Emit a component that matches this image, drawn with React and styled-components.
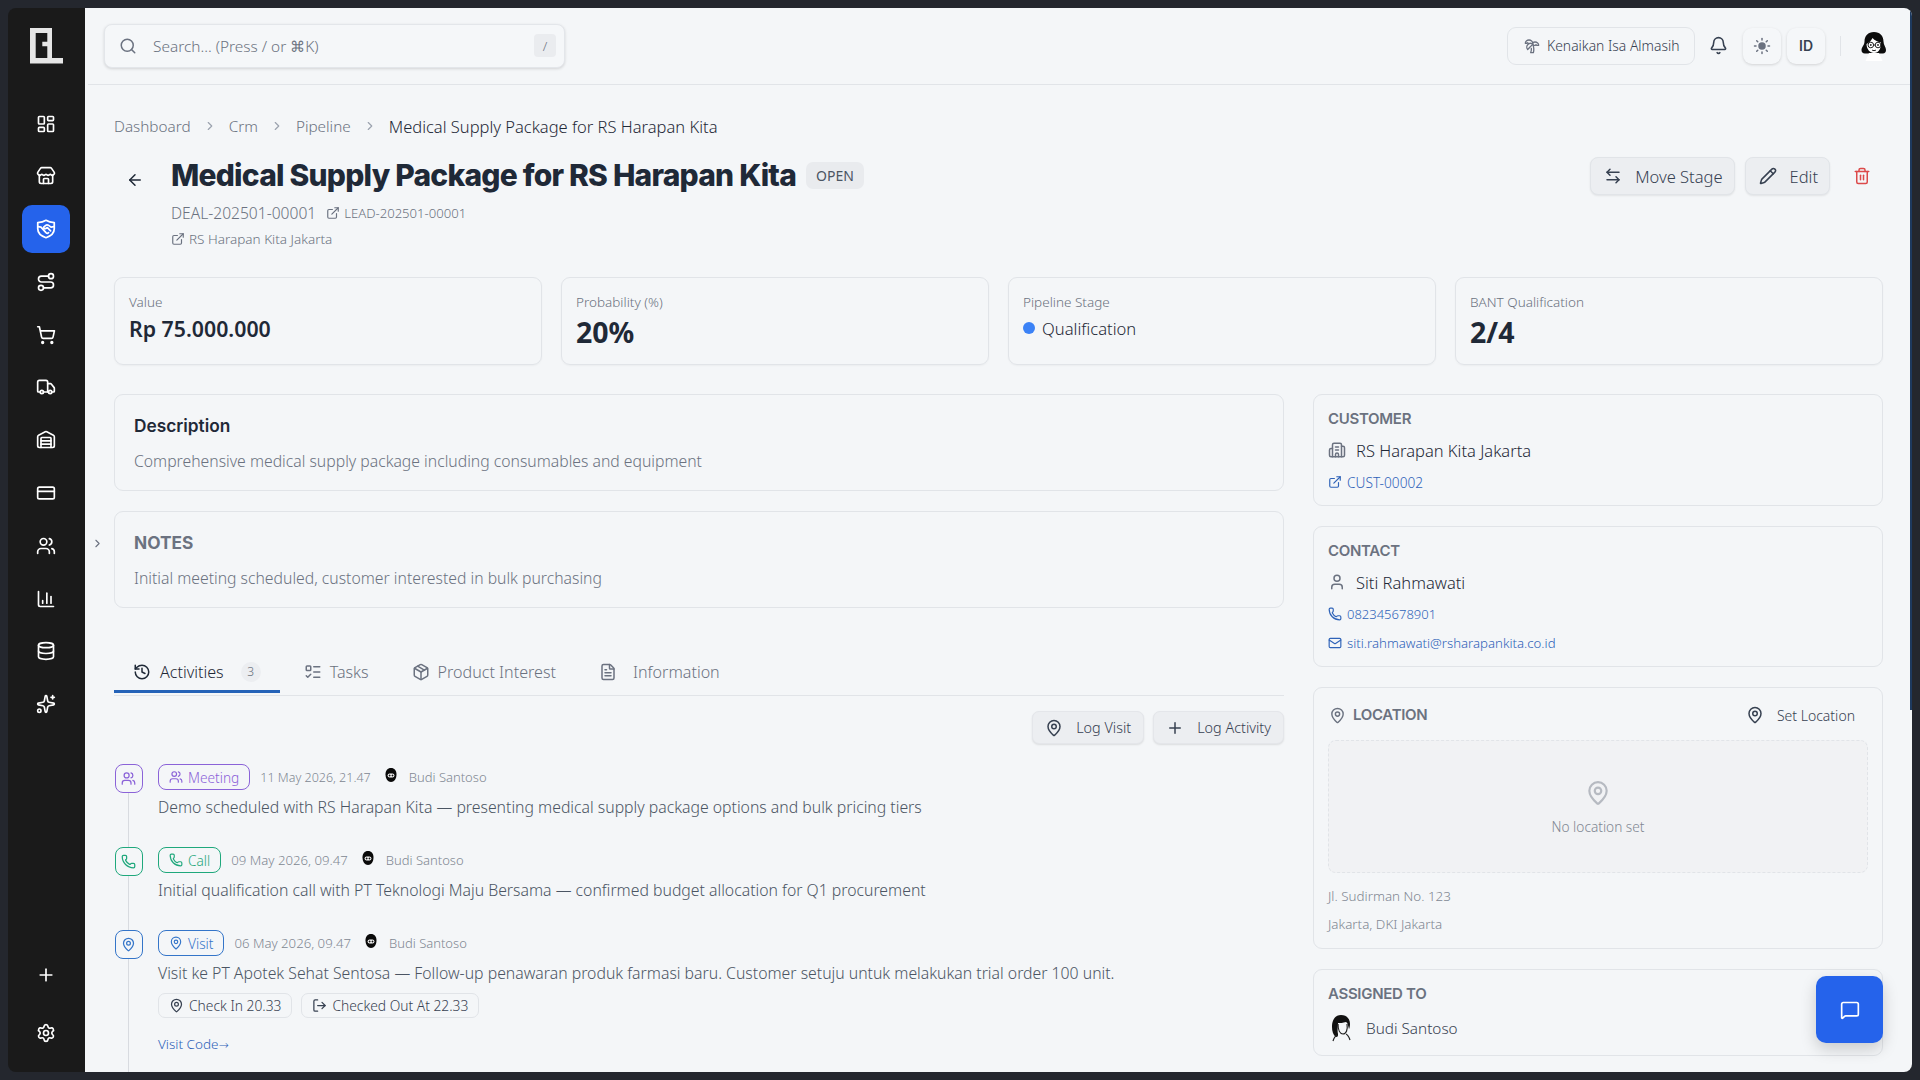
import styled, { createGlobalStyle } from 'styled-components';
import {
  ArrowLeft, ArrowLeftRight, Bell, Building2, ChartColumn, ChevronRight, CreditCard, Database,
  ExternalLink, FileText, History, LayoutDashboard, ListTodo, LogOut, Mail, MapPin, MessageSquare,
  Package, Pencil, Phone, Plus, Route, Search, Settings, ShoppingCart, Sparkles, Store, Sun,
  Trash2, TreePalm, Truck, User, Users, Warehouse,
} from 'lucide-react';

const BODY = '"Noto Sans", "Open Sans", Arial, sans-serif';
const HEAD = 'Inter, "Liberation Sans", Arial, sans-serif';

const GlobalStyle = createGlobalStyle`
  html, body {
    margin: 0;
    height: 100%;
    background: #24272e;
    font-family: ${BODY};
    font-weight: 350;
    overflow: hidden;
  }
  * { box-sizing: border-box; }
`;

const Logo = () => (
  <svg width="33" height="36" viewBox="0 0 33 36">
    <path
      fill="#e6e6e6"
      fillRule="evenodd"
      d="M0 0H22V30H33V35.500H0ZM5.700 5V30H17.300V18.300H12.300V13.700H17.300V5Z"
    />
  </svg>
);

const ShieldHandshake = () => (
  <svg width="22" height="22" viewBox="0 0 24 24" fill="none" stroke="currentColor" strokeWidth="1.900" strokeLinecap="round" strokeLinejoin="round">
    <path d="M12 2.500c2.500 1.500 5.500 2.300 9 2.500v6.800c0 4.600-3.500 7.900-9 9.700-5.500-1.800-9-5.100-9-9.700V5c3.500-.2 6.500-1 9-2.500z" />
    <path d="M3.500 9.500l3 .5 5.500 6c.8.800 2 .8 2.800 0" />
    <path d="M20.500 9.500l-3 .5-3-2.200c-1-.6-2-.5-2.800.2L9.500 10c-.7 1 .8 2.200 2.300 1.500l1.700-1 3.500 3.500" />
  </svg>
);

const GirlAvatar = () => (
  <svg width="30" height="32" viewBox="0 0 30 32">
    <path fill="#0c0c0c" d="M15 2c6 0 9.500 4 9.500 9.500 0 3.500 2.500 5.500 2.500 8.500 0 2.500-1.500 4-4 3.500H7c-3 .5-4.500-1-4.500-3.500 0-3 3-5 3-8.500C5.500 6 9 2 15 2z" />
    <path fill="#fff" d="M7.500 14c2.500-1 4.500-3 6-6 2 2.500 6 4 8.500 4.500 0 6-2 10.500-7 10.500-4 0-7.500-4-7.500-9zM10 23h10l3.500 8H6.500z" />
    <circle cx="11.800" cy="15" r="2.800" fill="none" stroke="#222" strokeWidth="1" />
    <circle cx="19" cy="15" r="2.800" fill="none" stroke="#222" strokeWidth="1" />
    <circle cx="11.800" cy="15" r=".9" fill="#222" />
    <circle cx="19" cy="15" r=".9" fill="#222" />
    <path d="M14.600 15h1.600M13 20c1 .8 3 .8 4 0" fill="none" stroke="#222" strokeWidth="1" />
  </svg>
);

const TinyAvatar = () => (
  <TinySlot>
    <svg width="14" height="16" viewBox="0 0 14 16">
      <path fill="#0a0a0a" d="M7 1c3.500 0 5.500 2.500 5.500 6.500 0 4.500-2.500 7.500-5.500 7.500s-5.500-3-5.500-7.500C1.500 3.500 3.500 1 7 1z" />
      <rect x="3.600" y="6.500" width="6.800" height="4" rx="2" fill="#fff" />
      <circle cx="5.600" cy="8.500" r="1" fill="#111" />
      <circle cx="8.500" cy="8.500" r="1" fill="#111" />
    </svg>
  </TinySlot>
);

const BudiAvatar = () => (
  <svg width="26" height="28" viewBox="0 0 26 28">
    <path fill="#111" d="M12 1c6 0 9 4 9 9 0 3-1 5-1 5-1-3-1-6-3-7-3 1-6 1-8 1 0 4-1 7 0 11 0 2 0 3-2 3-3-2-4-6-4-10C3 6 6 1 12 1z" />
    <path fill="none" stroke="#222" strokeWidth="1.200" d="M9 10c0 6 2 10 5 10s5-4 4-10M8 21c-2 1-3 3-4 6M17 20c2 1 3 3 4 6" />
  </svg>
);

const topNav = [LayoutDashboard, Store, ShieldHandshake, Route, ShoppingCart, Truck, Warehouse, CreditCard, Users, ChartColumn, Database, Sparkles];

const activities = [
  {
    kind: 'Meeting', tone: '#8b63d8', Icon: Users, date: '11 May 2026, 21.47', narrow: true,
    text: 'Demo scheduled with RS Harapan Kita — presenting medical supply package options and bulk pricing tiers',
  },
  {
    kind: 'Call', tone: '#1fa87c', Icon: Phone, date: '09 May 2026, 09.47',
    text: 'Initial qualification call with PT Teknologi Maju Bersama — confirmed budget allocation for Q1 procurement',
  },
  {
    kind: 'Visit', tone: '#3475c9', Icon: MapPin, date: '06 May 2026, 09.47',
    text: 'Visit ke PT Apotek Sehat Sentosa — Follow-up penawaran produk farmasi baru. Customer setuju untuk melakukan trial order 100 unit.',
    visit: true,
  },
];

export default function App() {
  return (
    <>
      <GlobalStyle />
      <Frame>
        <Sidebar>
          <LogoSlot><Logo /></LogoSlot>
          <NavList>
            {topNav.map((Icon, i) => (
              <NavItem key={i} $active={i === 2}><Icon size={20} strokeWidth={2} /></NavItem>
            ))}
          </NavList>
          <NavFoot>
            <NavItem><Plus size={20} strokeWidth={2} /></NavItem>
            <NavItem><Settings size={20} strokeWidth={2} /></NavItem>
          </NavFoot>
        </Sidebar>

        <Main>
          <TopBar>
            <SearchBox>
              <Search size={18} color="#6b7280" />
              <SearchText>Search... (Press / or ⌘K)</SearchText>
              <Kbd>/</Kbd>
            </SearchBox>
            <TopRight>
              <HolidayPill><TreePalm size={16} color="#6b7280" />Kenaikan Isa Almasih</HolidayPill>
              <BellSlot><Bell size={19} color="#374151" /></BellSlot>
              <SquareBtn><Sun size={18} color="#6b7280" fill="#6b7280" /></SquareBtn>
              <SquareBtn>ID</SquareBtn>
              <TopDivider />
              <GirlAvatar />
            </TopRight>
          </TopBar>

          <Content>
            <Breadcrumb>
              <Crumb>Dashboard</Crumb>
              <ChevronRight size={14} color="#9ca3af" />
              <Crumb>Crm</Crumb>
              <ChevronRight size={14} color="#9ca3af" />
              <Crumb>Pipeline</Crumb>
              <ChevronRight size={14} color="#9ca3af" />
              <Crumb $current>Medical Supply Package for RS Harapan Kita</Crumb>
            </Breadcrumb>

            <PageHead>
              <BackSlot><ArrowLeft size={18} color="#1f2937" /></BackSlot>
              <HeadBody>
                <TitleRow>
                  <Title>Medical Supply Package for RS Harapan Kita</Title>
                  <StatusBadge>OPEN</StatusBadge>
                </TitleRow>
                <CodeRow>
                  <DealCode>DEAL-202501-00001</DealCode>
                  <GreyLink><ExternalLink size={14} />LEAD-202501-00001</GreyLink>
                </CodeRow>
                <SubRow><ExternalLink size={14} />RS Harapan Kita Jakarta</SubRow>
              </HeadBody>
              <HeadActions>
                <ActionBtn><ArrowLeftRight size={18} />Move Stage</ActionBtn>
                <ActionBtn><Pencil size={18} />Edit</ActionBtn>
                <TrashBtn><Trash2 size={18} color="#dc4a4a" /></TrashBtn>
              </HeadActions>
            </PageHead>

            <StatGrid>
              <StatCard>
                <StatLabel>Value</StatLabel>
                <StatMoney>Rp 75.000.000</StatMoney>
              </StatCard>
              <StatCard>
                <StatLabel>Probability (%)</StatLabel>
                <StatBig>20%</StatBig>
              </StatCard>
              <StatCard>
                <StatLabel>Pipeline Stage</StatLabel>
                <StageRow><StageDot />Qualification</StageRow>
              </StatCard>
              <StatCard>
                <StatLabel>BANT Qualification</StatLabel>
                <StatBig>2/4</StatBig>
              </StatCard>
            </StatGrid>

            <Columns>
              <LeftCol>
                <TextCard>
                  <CardHeading>Description</CardHeading>
                  <CardText>Comprehensive medical supply package including consumables and equipment</CardText>
                </TextCard>
                <TextCard>
                  <CardHeading $muted>NOTES</CardHeading>
                  <CardText>Initial meeting scheduled, customer interested in bulk purchasing</CardText>
                </TextCard>

                <TabList>
                  <Tab $active $gap={9}><History size={18} />Activities<TabCount>3</TabCount></Tab>
                  <Tab><ListTodo size={18} />Tasks</Tab>
                  <Tab><Package size={18} />Product Interest</Tab>
                  <Tab $gap={16}><FileText size={18} />Information</Tab>
                </TabList>

                <LogRow>
                  <LogBtn><MapPin size={18} />Log Visit</LogBtn>
                  <LogBtn><Plus size={18} />Log Activity</LogBtn>
                </LogRow>

                <Timeline>
                  {activities.map((a) => (
                    <Item key={a.kind}>
                      <Rail>
                        <RailIcon $tone={a.tone}><a.Icon size={15} /></RailIcon>
                        <RailLine />
                      </Rail>
                      <ItemBody>
                        <ItemMeta>
                          <KindPill $tone={a.tone}><a.Icon size={14} />{a.kind}</KindPill>
                          <MetaDate $narrow={a.narrow}>{a.date}</MetaDate>
                          <TinyAvatar />
                          <MetaName>Budi Santoso</MetaName>
                        </ItemMeta>
                        <ItemText>{a.text}</ItemText>
                        {a.visit && (
                          <>
                            <ChipRow>
                              <Chip><MapPin size={15} />Check In 20.33</Chip>
                              <Chip><LogOut size={15} />Checked Out At 22.33</Chip>
                            </ChipRow>
                            <VisitCode>Visit Code<ArrowGlyph>→</ArrowGlyph></VisitCode>
                          </>
                        )}
                      </ItemBody>
                    </Item>
                  ))}
                </Timeline>
              </LeftCol>

              <RightCol>
                <SideCard>
                  <SideTitle>CUSTOMER</SideTitle>
                  <SideName><Building2 size={18} color="#6b7280" />RS Harapan Kita Jakarta</SideName>
                  <SideLink><ExternalLink size={14} />CUST-00002</SideLink>
                </SideCard>
                <SideCard>
                  <SideTitle>CONTACT</SideTitle>
                  <SideName><User size={18} color="#6b7280" />Siti Rahmawati</SideName>
                  <SideLink $size={13}><Phone size={14} />082345678901</SideLink>
                  <SideLink $size={13.200}><Mail size={14} />siti.rahmawati@rsharapankita.co.id</SideLink>
                </SideCard>
                <SideCard>
                  <LocationHead>
                    <SideTitle $icon><MapPin size={17} />LOCATION</SideTitle>
                    <SetLocation><MapPin size={18} />Set Location</SetLocation>
                  </LocationHead>
                  <MapEmpty>
                    <MapPin size={26} color="#b6bac1" />
                    <MapEmptyText>No location set</MapEmptyText>
                  </MapEmpty>
                  <Address>Jl. Sudirman No. 123</Address>
                  <Address $tight>Jakarta, DKI Jakarta</Address>
                </SideCard>
                <SideCard>
                  <SideTitle>ASSIGNED TO</SideTitle>
                  <AssigneeRow><BudiAvatar />Budi Santoso</AssigneeRow>
                </SideCard>
              </RightCol>
            </Columns>
          </Content>

          <CollapseToggle><ChevronRight size={13} color="#6b7280" /></CollapseToggle>
          <ScrollThumb />
          <Fab><MessageSquare size={20} color="#fff" /></Fab>
        </Main>
      </Frame>
    </>
  );
}

const Frame = styled.div`
  width: 1920px;
  height: 1080px;
  padding: 8px;
  display: flex;
  overflow: hidden;
`;

const Sidebar = styled.aside`
  width: 77px;
  flex-shrink: 0;
  background: #1a1a1a;
  border-radius: 8px 0 0 8px;
  display: flex;
  flex-direction: column;
  align-items: center;
  padding: 20px 1px 15px 0;
`;

const LogoSlot = styled.div`
  height: 36px;
  display: flex;
  justify-content: center;
`;

const NavList = styled.nav`
  margin-top: 35.500px;
  display: flex;
  flex-direction: column;
  gap: 4.800px;
`;

const NavFoot = styled.div`
  margin-top: auto;
  display: flex;
  flex-direction: column;
  gap: 10px;
`;

const NavItem = styled.div`
  width: 48px;
  height: 48px;
  border-radius: 10px;
  display: flex;
  align-items: center;
  justify-content: center;
  color: #fff;
  background: ${({ $active }) => ($active ? '#2563eb' : 'transparent')};
`;

const Main = styled.main`
  position: relative;
  flex: 1;
  min-width: 0;
  background: #f4f6f8;
  border-radius: 0 8px 8px 0;
  overflow: hidden;
  display: flex;
  flex-direction: column;
`;

const TopBar = styled.header`
  height: 77px;
  flex-shrink: 0;
  margin-left: 3px;
  padding: 0 23px 1px 16px;
  border-bottom: 1px solid #e1e4e8;
  display: flex;
  align-items: center;
  justify-content: space-between;
`;

const SearchBox = styled.div`
  width: 461px;
  height: 44px;
  padding: 0 8px 0 14px;
  background: #f5f7f9;
  border: 1px solid #e3e6ea;
  border-radius: 8px;
  box-shadow: 0 1px 3px rgba(0, 0, 0, 0.14);
  display: flex;
  align-items: center;
  gap: 16px;
`;

const SearchText = styled.span`
  flex: 1;
  padding-top: 1px;
  font-size: 15.400px;
  color: #6b7280;
`;

const Kbd = styled.span`
  width: 22px;
  height: 23px;
  border-radius: 4px;
  background: #eaecef;
  color: #6b7280;
  font-size: 13px;
  display: flex;
  align-items: center;
  justify-content: center;
`;

const TopRight = styled.div`
  display: flex;
  align-items: center;
`;

const HolidayPill = styled.div`
  width: 188px;
  height: 38px;
  border: 1px solid #e1e4e8;
  border-radius: 9px;
  padding-left: 16px;
  display: flex;
  align-items: center;
  gap: 7px;
  font-size: 13.900px;
  color: #374151;
`;

const BellSlot = styled.div`
  width: 47px;
  margin-right: 1px;
  display: flex;
  justify-content: center;
`;

const SquareBtn = styled.div`
  width: 38px;
  height: 36px;
  margin-right: 6px;
  border-radius: 9px;
  background: #f5f7f9;
  box-shadow: 0 1px 3px rgba(0, 0, 0, 0.14);
  display: flex;
  align-items: center;
  justify-content: center;
  font-family: ${HEAD};
  font-size: 14px;
  font-weight: 600;
  color: #374151;
`;

const TopDivider = styled.div`
  width: 1px;
  height: 20px;
  margin: 0 18px 0 9px;
  background: #e1e4e8;
`;

const Content = styled.div`
  flex: 1;
  min-height: 0;
  padding: 29px 29px 0 29px;
`;

const Breadcrumb = styled.div`
  height: 24px;
  display: flex;
  align-items: center;
  gap: 12px;
`;

const Crumb = styled.span`
  font-size: ${({ $current }) => ($current ? '16.500px' : '15.300px')};
  color: ${({ $current }) => ($current ? '#1f2937' : '#6b7280')};
`;

const PageHead = styled.div`
  margin-top: 19px;
  display: flex;
  align-items: flex-start;
`;

const BackSlot = styled.div`
  width: 57px;
  height: 46px;
  padding-left: 12px;
  display: flex;
  align-items: center;
`;

const HeadBody = styled.div`
  flex: 1;
  min-width: 0;
`;

const TitleRow = styled.div`
  height: 36px;
  display: flex;
  align-items: center;
  gap: 10px;
`;

const Title = styled.h1`
  margin: 0;
  font-family: ${HEAD};
  font-size: 30px;
  line-height: 36px;
  font-weight: 800;
  letter-spacing: -0.780px;
  color: #1f2937;
`;

const StatusBadge = styled.span`
  height: 27px;
  margin-top: 1px;
  padding: 0 10px;
  border-radius: 7px;
  background: #e9ebee;
  color: #4b5563;
  font-size: 14px;
  font-weight: 400;
  display: flex;
  align-items: center;
`;

const CodeRow = styled.div`
  margin-top: 9px;
  height: 22px;
  display: flex;
  align-items: center;
  gap: 10px;
`;

const DealCode = styled.span`
  font-size: 15.600px;
  color: #6b7280;
`;

const GreyLink = styled.span`
  display: flex;
  align-items: center;
  gap: 4px;
  font-size: 13.100px;
  color: #6b7280;
`;

const SubRow = styled.div`
  margin-top: 5px;
  height: 20px;
  display: flex;
  align-items: center;
  gap: 4px;
  font-size: 13.500px;
  color: #6b7280;
`;

const HeadActions = styled.div`
  display: flex;
  align-items: center;
  gap: 10px;
`;

const ActionBtn = styled.button`
  height: 38px;
  padding: 0 11px 0 13px;
  background: #eceef1;
  border: 1px solid #e1e4e8;
  border-radius: 8px;
  box-shadow: 0 1px 2px rgba(0, 0, 0, 0.08);
  display: flex;
  align-items: center;
  gap: 13px;
  font-family: ${BODY};
  font-weight: inherit;
  font-size: 16.500px;
  color: #374151;
`;

const TrashBtn = styled.button`
  width: 32px;
  height: 38px;
  margin: 0 5px 0 6px;
  padding: 0;
  background: none;
  border: none;
  display: flex;
  align-items: center;
  justify-content: center;
`;

const StatGrid = styled.section`
  margin-top: 28px;
  display: grid;
  grid-template-columns: repeat(4, 1fr);
  gap: 19px;
`;

const StatCard = styled.div`
  height: 88px;
  padding: 14px 14px 0;
  border: 1px solid #e1e4e8;
  border-radius: 9px;
  box-shadow: 0 1px 2px rgba(0, 0, 0, 0.04);
`;

const StatLabel = styled.div`
  font-size: 13.500px;
  line-height: 20px;
  color: #6b7280;
`;

const StatMoney = styled.div`
  margin-top: 3px;
  font-size: 21.300px;
  line-height: 28px;
  font-weight: 600;
  color: #1f2937;
`;

const StatBig = styled.div`
  margin-top: 2px;
  font-size: 28.500px;
  line-height: 36px;
  font-weight: 700;
  color: #1f2937;
`;

const StageRow = styled.div`
  margin-top: 2px;
  height: 28px;
  display: flex;
  align-items: center;
  gap: 7px;
  font-size: 16.600px;
  color: #1f2937;
`;

const StageDot = styled.span`
  width: 12px;
  height: 12px;
  border-radius: 50%;
  background: #3b82f6;
`;

const Columns = styled.div`
  margin-top: 29px;
  display: grid;
  grid-template-columns: minmax(0, 1fr) 570px;
  gap: 29px;
  align-items: start;
`;

const LeftCol = styled.div`
  min-width: 0;
`;

const TextCard = styled.div`
  height: 97px;
  padding: 19px 15px 0 19px;
  margin-bottom: 20px;
  border: 1px solid #e1e4e8;
  border-radius: 9px;
`;

const CardHeading = styled.h3`
  margin: 0;
  font-family: ${HEAD};
  font-size: 17.300px;
  line-height: 24px;
  font-weight: ${({ $muted }) => ($muted ? 700 : 600)};
  color: ${({ $muted }) => ($muted ? '#6b7280' : '#1f2937')};
`;

const CardText = styled.p`
  margin: 11px 0 0;
  font-size: 15.750px;
  line-height: 24px;
  color: #6b7280;
`;

const TabList = styled.div`
  margin-top: 45px;
  padding-bottom: 2px;
  border-bottom: 1px solid #e1e4e8;
  display: flex;
  gap: 5px;
`;

const Tab = styled.div`
  height: 40px;
  padding: 0 19px;
  display: flex;
  align-items: center;
  gap: ${({ $gap }) => $gap || 8}px;
  font-size: 16.100px;
  color: ${({ $active }) => ($active ? '#1f2937' : '#6b7280')};
  border-bottom: 3px solid ${({ $active }) => ($active ? '#2563b8' : 'transparent')};
`;

const TabCount = styled.span`
  width: 20px;
  height: 20px;
  margin-left: 8px;
  border-radius: 50%;
  background: #eceef1;
  color: #6b7280;
  font-size: 12px;
  display: flex;
  align-items: center;
  justify-content: center;
`;

const LogRow = styled.div`
  margin-top: 15px;
  display: flex;
  justify-content: flex-end;
  gap: 9px;
`;

const LogBtn = styled.button`
  height: 33px;
  padding: 0 12px;
  background: #eceef1;
  border: 1px solid #e4e6ea;
  border-radius: 7px;
  box-shadow: 0 1px 2px rgba(0, 0, 0, 0.1);
  display: flex;
  align-items: center;
  gap: 13px;
  font-family: ${BODY};
  font-weight: inherit;
  font-size: 14.400px;
  color: #374151;
`;

const Timeline = styled.div`
  margin-top: 20px;
`;

const Item = styled.div`
  display: flex;
  gap: 15px;
`;

const Rail = styled.div`
  width: 29px;
  flex-shrink: 0;
  display: flex;
  flex-direction: column;
  align-items: center;
`;

const RailIcon = styled.div`
  width: 28px;
  height: 29px;
  border-radius: 8px;
  border: 1px solid ${({ $tone }) => $tone};
  color: ${({ $tone }) => $tone};
  display: flex;
  align-items: center;
  justify-content: center;
`;

const RailLine = styled.div`
  flex: 1;
  width: 1px;
  background: #d8dbe0;
`;

const ItemBody = styled.div`
  flex: 1;
  min-width: 0;
  padding-bottom: 28px;
`;

const ItemMeta = styled.div`
  height: 26px;
  display: flex;
  align-items: center;
  gap: 10px;
`;

const KindPill = styled.span`
  height: 26px;
  padding: 0 10px;
  border: 1px solid ${({ $tone }) => $tone};
  border-radius: 8px;
  color: ${({ $tone }) => $tone};
  font-size: 13.700px;
  display: flex;
  align-items: center;
  gap: 5px;
`;

const TinySlot = styled.span`
  width: 16px;
  height: 20px;
  margin: 0 0 4px 2px;
  display: flex;
  align-items: center;
  justify-content: center;
`;

const MetaDate = styled.span`
  font-size: ${({ $narrow }) => ($narrow ? '12.500px' : '13.200px')};
  color: #808792;
`;

const MetaName = styled.span`
  font-size: 13px;
  color: #808792;
`;

const ItemText = styled.p`
  margin: 5px 0 0;
  font-size: 15.800px;
  line-height: 24px;
  color: #4b5563;
`;

const ChipRow = styled.div`
  margin-top: 8px;
  display: flex;
  gap: 9px;
`;

const Chip = styled.span`
  height: 25px;
  padding: 0 10px;
  border: 1px solid #e1e4e8;
  border-radius: 7px;
  display: flex;
  align-items: center;
  gap: 5px;
  font-size: 13.800px;
  color: #374151;
`;

const VisitCode = styled.div`
  margin-top: 16px;
  font-size: 13.500px;
  line-height: 20px;
  color: #2f63b8;
`;

const ArrowGlyph = styled.span`
  font-family: "DejaVu Sans", sans-serif;
  font-size: 12px;
`;

const RightCol = styled.div`
  display: flex;
  flex-direction: column;
  gap: 20px;
`;

const SideCard = styled.div`
  padding: 14px 14px 13px;
  border: 1px solid #e1e4e8;
  border-radius: 9px;
`;

const SideTitle = styled.h4`
  margin: 0;
  font-family: ${HEAD};
  font-size: 15px;
  line-height: 20px;
  font-weight: 600;
  color: #6b7280;
  display: flex;
  align-items: center;
  gap: 7px;
  letter-spacing: -0.3px;
  padding-left: ${({ $icon }) => ($icon ? '1px' : '0')};
`;

const SideName = styled.div`
  margin: 9px 0 10px;
  height: 24px;
  display: flex;
  align-items: center;
  gap: 10px;
  font-size: 16.500px;
  color: #1f2937;
`;

const SideLink = styled.div`
  margin-top: 9px;
  height: 20px;
  display: flex;
  align-items: center;
  gap: 5px;
  font-size: ${({ $size }) => $size || 13.700}px;
  color: #2f63b8;
`;

const LocationHead = styled.div`
  height: 26px;
  display: flex;
  align-items: center;
  justify-content: space-between;
`;

const SetLocation = styled.div`
  padding-right: 13px;
  display: flex;
  align-items: center;
  gap: 13px;
  font-size: 14px;
  color: #374151;
`;

const MapEmpty = styled.div`
  margin-top: 12px;
  height: 133px;
  padding-top: 3px;
  background: #f1f2f4;
  border: 1px dashed #e1e4e8;
  border-radius: 8px;
  display: flex;
  flex-direction: column;
  align-items: center;
  justify-content: center;
  gap: 11px;
`;

const MapEmptyText = styled.span`
  font-size: 13.700px;
  color: #808792;
`;

const Address = styled.div`
  margin-top: ${({ $tight }) => ($tight ? '8px' : '13px')};
  margin-bottom: ${({ $tight }) => ($tight ? '1px' : '0')};
  font-size: 13.400px;
  line-height: 20px;
  color: #808792;
`;

const AssigneeRow = styled.div`
  margin-top: 10px;
  height: 28px;
  padding-left: 1px;
  display: flex;
  align-items: center;
  gap: 11px;
  font-size: 15.300px;
  color: #374151;
`;

const CollapseToggle = styled.div`
  position: absolute;
  left: 6px;
  top: 527px;
  width: 13px;
  height: 16px;
  display: flex;
  align-items: center;
  justify-content: center;
`;

const ScrollThumb = styled.div`
  position: absolute;
  right: 0;
  top: 0;
  width: 2px;
  height: 702px;
  background: #1e3a5f;
`;

const Fab = styled.button`
  position: absolute;
  right: 29px;
  bottom: 29px;
  width: 67px;
  height: 67px;
  border: none;
  border-radius: 10px;
  background: #2563eb;
  box-shadow: 0 6px 16px rgba(0, 0, 0, 0.18);
  display: flex;
  align-items: center;
  justify-content: center;
`;
